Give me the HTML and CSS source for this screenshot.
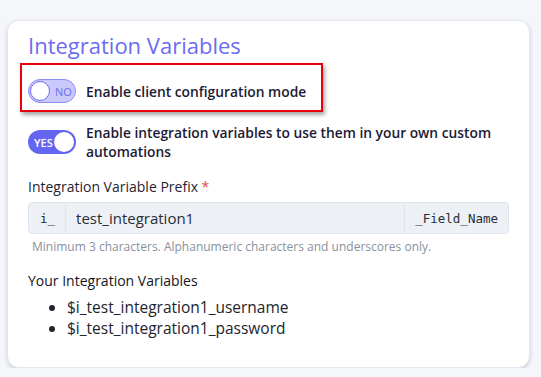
FILE: index.html
```html
<!DOCTYPE html>
<html lang="en">
<head>
    <meta charset="UTF-8">
    <meta name="viewport" content="width=device-width, initial-scale=1.0">
    <title>Integration Variables</title>
    <link rel="stylesheet" href="styles.css">
</head>
<body>

    <div class="card">
        <h2>Integration Variables</h2>

        <!-- Client configuration toggle (highlighted) -->
        <div class="toggle-row highlighted">
            <span class="toggle off"><span class="knob"></span><span class="toggle-text">NO</span></span>
            <span class="toggle-label">Enable client configuration mode</span>
        </div>

        <!-- Integration variables toggle -->
        <div class="toggle-row last">
            <span class="toggle on"><span class="toggle-text">YES</span><span class="knob"></span></span>
            <span class="toggle-label">Enable integration variables to use them in your own custom automations</span>
        </div>

        <!-- Prefix field -->
        <label class="field-label">Integration Variable Prefix <span class="required">*</span></label>
        <div class="input-group">
            <span class="addon addon-left">i_</span>
            <input type="text" value="test_integration1">
            <span class="addon addon-right">_Field_Name</span>
        </div>
        <p class="help">Minimum 3 characters. Alphanumeric characters and underscores only.</p>

        <!-- Variable list -->
        <h3>Your Integration Variables</h3>
        <ul class="var-list">
            <li>$i_test_integration1_username</li>
            <li>$i_test_integration1_password</li>
        </ul>
    </div>

</body>
</html>
```

FILE: styles.css
```css
/* Global Styles */
body {
    font-family: 'Open Sans', 'DejaVu Sans', sans-serif;
    margin: 0;
    padding: 0;
    background: #f4f6fa;
    color: #1b1a33;
}

/* Card */
.card {
    width: 481px;
    margin: 20px 0 0 7px;
    padding: 10px 20px 28px;
    background: #fff;
    border: 1px solid #e3e8ef;
    border-radius: 12px;
    box-shadow: 0 2px 4px rgba(30, 40, 60, 0.18);
}

.card h2 {
    margin: 0 0 20px;
    font-size: 22px;
    line-height: 28px;
    font-weight: 500;
    color: #6b6cf1;
}

/* Toggles */
.toggle-row {
    display: flex;
    align-items: center;
    gap: 10px;
    margin-bottom: 20px;
    position: relative;
}

.toggle-row.last {
    margin-bottom: 16px;
}

.highlighted::after {
    content: "";
    position: absolute;
    left: -8px;
    top: -16px;
    width: 299px;
    height: 45px;
    border: 2px solid #e8000b;
    box-shadow: 2px 3px 4px rgba(0, 0, 0, 0.35);
}

.toggle {
    flex: none;
    box-sizing: border-box;
    width: 48px;
    height: 24px;
    border-radius: 12px;
    display: flex;
    align-items: center;
    padding: 0 2px;
    font-size: 11px;
}

.toggle .knob {
    box-sizing: border-box;
    width: 20px;
    height: 20px;
    border-radius: 50%;
    background: #fff;
}

.toggle.off {
    background: #c9c9fb;
    border: 1px solid #8e8ff3;
    color: #6d6eef;
    padding: 0 1px;
}

.toggle.off .knob {
    border: 1px solid #6d6eef;
}

.toggle.off .toggle-text {
    margin-left: 5px;
}

.toggle.on {
    background: #6466f1;
    color: #fff;
    justify-content: space-between;
    padding: 0 2px 0 6px;
    font-weight: 600;
}

.toggle-label {
    font-size: 13.8px;
    line-height: 19px;
    font-weight: 600;
    color: #1c1a35;
}

/* Prefix field */
.field-label {
    display: block;
    margin: 0;
    font-size: 14px;
    line-height: 20px;
    color: #1f2430;
}

.required {
    color: #e5484d;
}

.input-group {
    display: flex;
    margin-top: 5px;
    height: 32px;
    box-sizing: border-box;
    background: #edf1f6;
    border: 1px solid #dfe5ec;
    border-radius: 4px;
}

.addon {
    font-family: 'DejaVu Sans Mono', monospace;
    font-size: 12.5px;
    color: #2a2d35;
    display: flex;
    align-items: center;
}

.addon-left {
    padding: 0 10px 0 11px;
    border-right: 1px solid #dfe5ec;
}

.addon-right {
    padding: 0 10px;
    border-left: 1px solid #dfe5ec;
}

.input-group input {
    flex: 1;
    min-width: 0;
    border: none;
    outline: none;
    background: transparent;
    padding: 0 10px;
    font-family: 'Open Sans', sans-serif;
    font-size: 15px;
    color: #2a2d35;
}

.help {
    margin: 5px 0 0 4px;
    font-size: 12px;
    line-height: 16px;
    color: #8a909c;
}

/* Variable list */
.card h3 {
    margin: 16px 0 0;
    font-size: 14px;
    line-height: 20px;
    font-weight: 400;
    color: #14151c;
}

.var-list {
    margin: 6px 0 0;
    padding-left: 39px;
    font-size: 15.5px;
    line-height: 21px;
    color: #22242e;
}
```
